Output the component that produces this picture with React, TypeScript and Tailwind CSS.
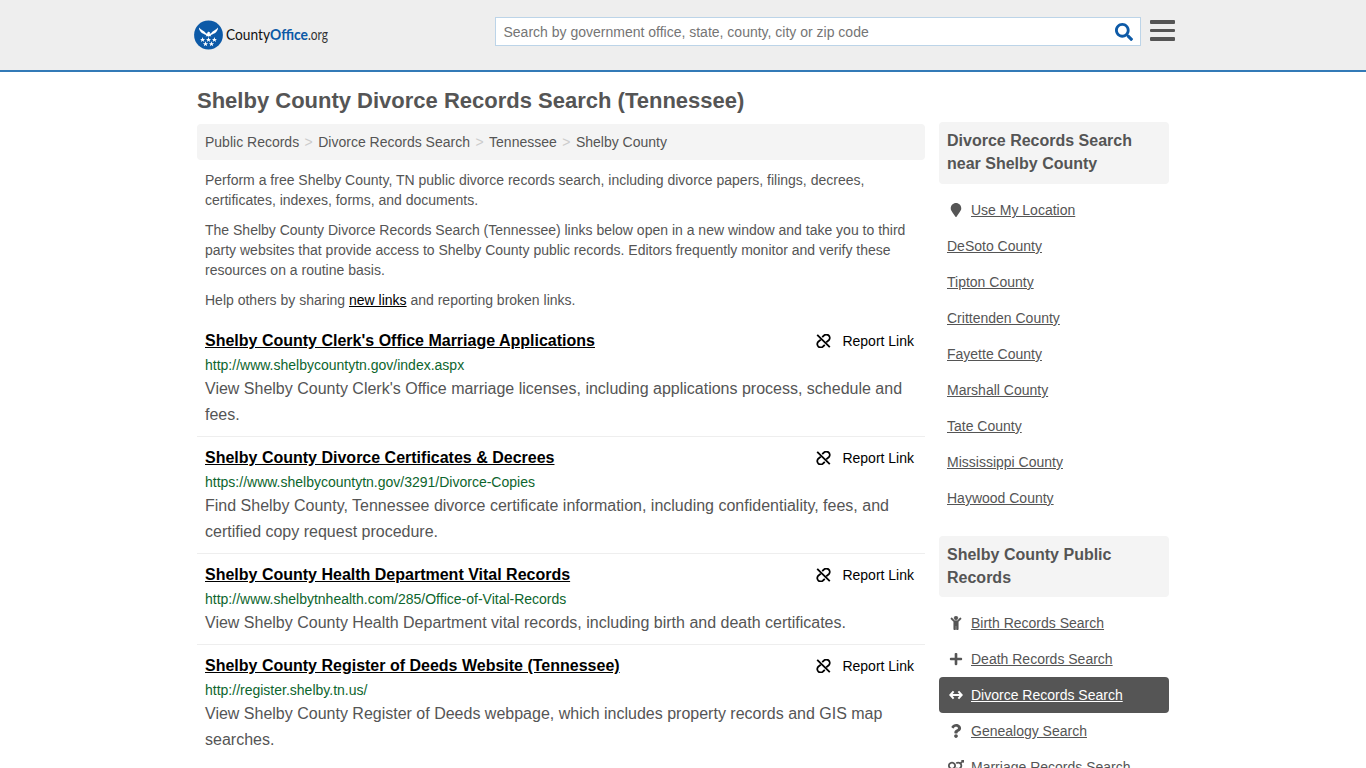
import React from "react";
import { FaChild, FaMapMarker, FaPlus, FaQuestion, FaSearch, FaVenusMars } from "react-icons/fa";

const crumbs = ["Public Records", "Divorce Records Search", "Tennessee", "Shelby County"];

const results = [
  {
    title: "Shelby County Clerk's Office Marriage Applications",
    url: "http://www.shelbycountytn.gov/index.aspx",
    text: "View Shelby County Clerk's Office marriage licenses, including applications process, schedule and fees.",
  },
  {
    title: "Shelby County Divorce Certificates & Decrees",
    url: "https://www.shelbycountytn.gov/3291/Divorce-Copies",
    text: "Find Shelby County, Tennessee divorce certificate information, including confidentiality, fees, and certified copy request procedure.",
  },
  {
    title: "Shelby County Health Department Vital Records",
    url: "http://www.shelbytnhealth.com/285/Office-of-Vital-Records",
    text: "View Shelby County Health Department vital records, including birth and death certificates.",
  },
  {
    title: "Shelby County Register of Deeds Website (Tennessee)",
    url: "http://register.shelby.tn.us/",
    text: "View Shelby County Register of Deeds webpage, which includes property records and GIS map searches.",
  },
];

const counties = [
  "DeSoto County",
  "Tipton County",
  "Crittenden County",
  "Fayette County",
  "Marshall County",
  "Tate County",
  "Mississippi County",
  "Haywood County",
];

function ArrowsIcon() {
  return (
    <svg width="14" height="14" viewBox="0 0 14 14" fill="none" stroke="currentColor" strokeWidth="2" className="block">
      <path d="M1.500 7H12.500M4.600 3.400L1.300 7 4.600 10.600M9.400 3.400L12.700 7 9.400 10.600" />
    </svg>
  );
}

const records = [
  { label: "Birth Records Search", icon: <FaChild size={14} stroke="currentColor" strokeWidth={10} /> },
  { label: "Death Records Search", icon: <FaPlus size={14} /> },
  { label: "Divorce Records Search", icon: <ArrowsIcon />, active: true },
  { label: "Genealogy Search", icon: <FaQuestion size={14} /> },
  { label: "Marriage Records Search", icon: <FaVenusMars size={16} className="mb-px" /> },
];

const star = "M0-2.7L.7-.8 2.6-.8 1.1.4 1.7 2.3 0 1.1-1.7 2.3-1.1.4-2.6-.8-.7-.8Z";

function Logo() {
  return (
    <svg width="138" height="30" viewBox="0 0 138 30" className="block">
      <circle cx="14.5" cy="15" r="14.4" fill="#0d5aa7" />
      <g fill="#fff">
        <path d="M5 7.600C6.800 10.200 9.800 10.600 12.200 13.400L13.200 13.600C13.300 12.200 14 11.700 14.800 11.800L16.100 12.400 15.600 13.500 16.800 13.400C19.200 10.600 22.200 10.200 24 7.600C24 9.400 23.500 10.600 22.600 11.400C21.800 12.600 20.800 13.400 19.500 13.800C18.600 14.600 17.600 15 16.600 14.900L17.300 16.500 15.800 15.900 14.500 16.800 13.200 15.900 11.700 16.500 12.400 14.900C11.400 15 10.400 14.600 9.500 13.800C8.200 13.400 7.200 12.600 6.400 11.400C5.500 10.600 5 9.400 5 7.600Z" />
        {[[8.600, 19.700], [14.500, 19.700], [20.400, 19.700], [11.500, 24], [17.500, 24]].map(([x, y]) => (
          <path key={x} d={star} transform={`translate(${x} ${y})`} />
        ))}
      </g>
      <g fontFamily="Lato, 'Liberation Sans', sans-serif" fontSize="14.500">
        <text x="32" y="20.300" fill="#111" textLength="44" lengthAdjust="spacingAndGlyphs">County</text>
        <text x="76" y="20.300" fill="#0d5aa7" fontWeight="700" textLength="38" lengthAdjust="spacingAndGlyphs">Office</text>
        <text x="114" y="20.300" fill="#333" textLength="20" lengthAdjust="spacingAndGlyphs">.org</text>
      </g>
    </svg>
  );
}

function BrokenLink() {
  return (
    <svg width="15" height="14" viewBox="0 0 15 14" fill="none" stroke="currentColor" strokeWidth="1.800" className="block">
      <path d="M1.200 .800L13.800 13.200" />
      <path d="M6.200 3.100L7.700 1.800A3.200 3.200 0 0 1 13 6L10.200 8.400" />
      <path d="M8.800 10.900L7.300 12.200A3.200 3.200 0 0 1 2 8L4.800 5.600" />
    </svg>
  );
}

export default function App() {
  return (
    <div className="h-[768px] overflow-hidden bg-white font-['Liberation_Sans',Arial,sans-serif] text-sm text-[#555]">
      <header className="flex h-[72px] border-b-2 border-[#337ab7] bg-[#eee] pl-[194px]">
        <div className="w-[301px] pt-5">
          <Logo />
        </div>
        <div className="mt-[17px] flex h-[29px] w-[646px] items-center justify-between border border-[#bcd4e8] bg-white pr-[7px] pl-[7.500px]">
          <span className="text-[#757575]">Search by government office, state, county, city or zip code</span>
          <FaSearch size={18} className="text-[#0d5aa7]" />
        </div>
        <div className="mt-5 ml-[9px] flex h-[21px] w-[25px] flex-col justify-between">
          <span className="h-1 rounded-[1px] bg-[#555]" />
          <span className="h-[3px] rounded-[1px] bg-[#555]" />
          <span className="h-1 rounded-[1px] bg-[#555]" />
        </div>
      </header>

      <div className="flex gap-[14px] pl-[197px]">
        <main className="w-[728px] pt-4">
          <h1 className="h-9 text-[22px] leading-[26px] font-bold whitespace-nowrap">
            Shelby County Divorce Records Search (Tennessee)
          </h1>
          <nav className="flex h-9 items-center rounded bg-[#f4f4f4] px-2">
            {crumbs.map((c, i) => (
              <React.Fragment key={c}>
                {i > 0 && <span className="w-[19.100px] text-center text-[#ccc]">&gt;</span>}
                <span>{c}</span>
              </React.Fragment>
            ))}
          </nav>
          <div className="flex flex-col gap-[10px] px-2 pt-[10px] leading-5">
            <p>
              Perform a free Shelby County, TN public divorce records search, including divorce papers, filings, decrees,
              <br />
              certificates, indexes, forms, and documents.
            </p>
            <p>
              The Shelby County Divorce Records Search (Tennessee) links below open in a new window and take you to third
              <br />
              party websites that provide access to Shelby County public records. Editors frequently monitor and verify these
              <br />
              resources on a routine basis.
            </p>
            <p>
              Help others by sharing <a className="text-black underline">new links</a> and reporting broken links.
            </p>
          </div>
          <ul className="mt-[10px]">
            {results.map((r) => (
              <li key={r.url} className="border-b border-[#eee] px-2 pt-[9px] pb-2 last:border-b-0">
                <div className="flex h-6 items-center justify-between pr-[3px]">
                  <a className="text-base leading-6 font-bold text-black underline">{r.title}</a>
                  <div className="flex items-center gap-[11px] text-black">
                    <BrokenLink />
                    <span>Report Link</span>
                  </div>
                </div>
                <div className="h-[23px] leading-[25px] text-[#0d652d]">{r.url}</div>
                <p className="text-base leading-[26px]">{r.text}</p>
              </li>
            ))}
          </ul>
        </main>

        <aside className="w-[230px] pt-[50px]">
          <h2 className="h-[62px] rounded bg-[#f4f4f4] px-2 pt-[7px] text-base leading-[23px] font-bold">
            Divorce Records Search
            <br />
            near Shelby County
          </h2>
          <ul className="mt-2">
            <li className="flex h-9 items-center pl-2">
              <span className="flex w-6 pl-[2px]">
                <FaMapMarker size={14} />
              </span>
              <a className="underline">Use My Location</a>
            </li>
            {counties.map((c) => (
              <li key={c} className="flex h-9 items-center px-2">
                <a className="underline">{c}</a>
              </li>
            ))}
          </ul>
          <h2 className="mt-5 h-[61px] rounded bg-[#f4f4f4] px-2 pt-[7px] text-base leading-[23px] font-bold">
            Shelby County Public
            <br />
            Records
          </h2>
          <ul className="mt-2">
            {records.map(({ label, icon, active }) => (
              <li
                key={label}
                className={active ? "flex h-9 items-center rounded bg-[#555] pl-2 text-white" : "flex h-9 items-center pl-2"}
              >
                <span className="flex w-[18px] justify-center">{icon}</span>
                <a className="ml-[6px] underline">{label}</a>
              </li>
            ))}
          </ul>
        </aside>
      </div>
    </div>
  );
}
